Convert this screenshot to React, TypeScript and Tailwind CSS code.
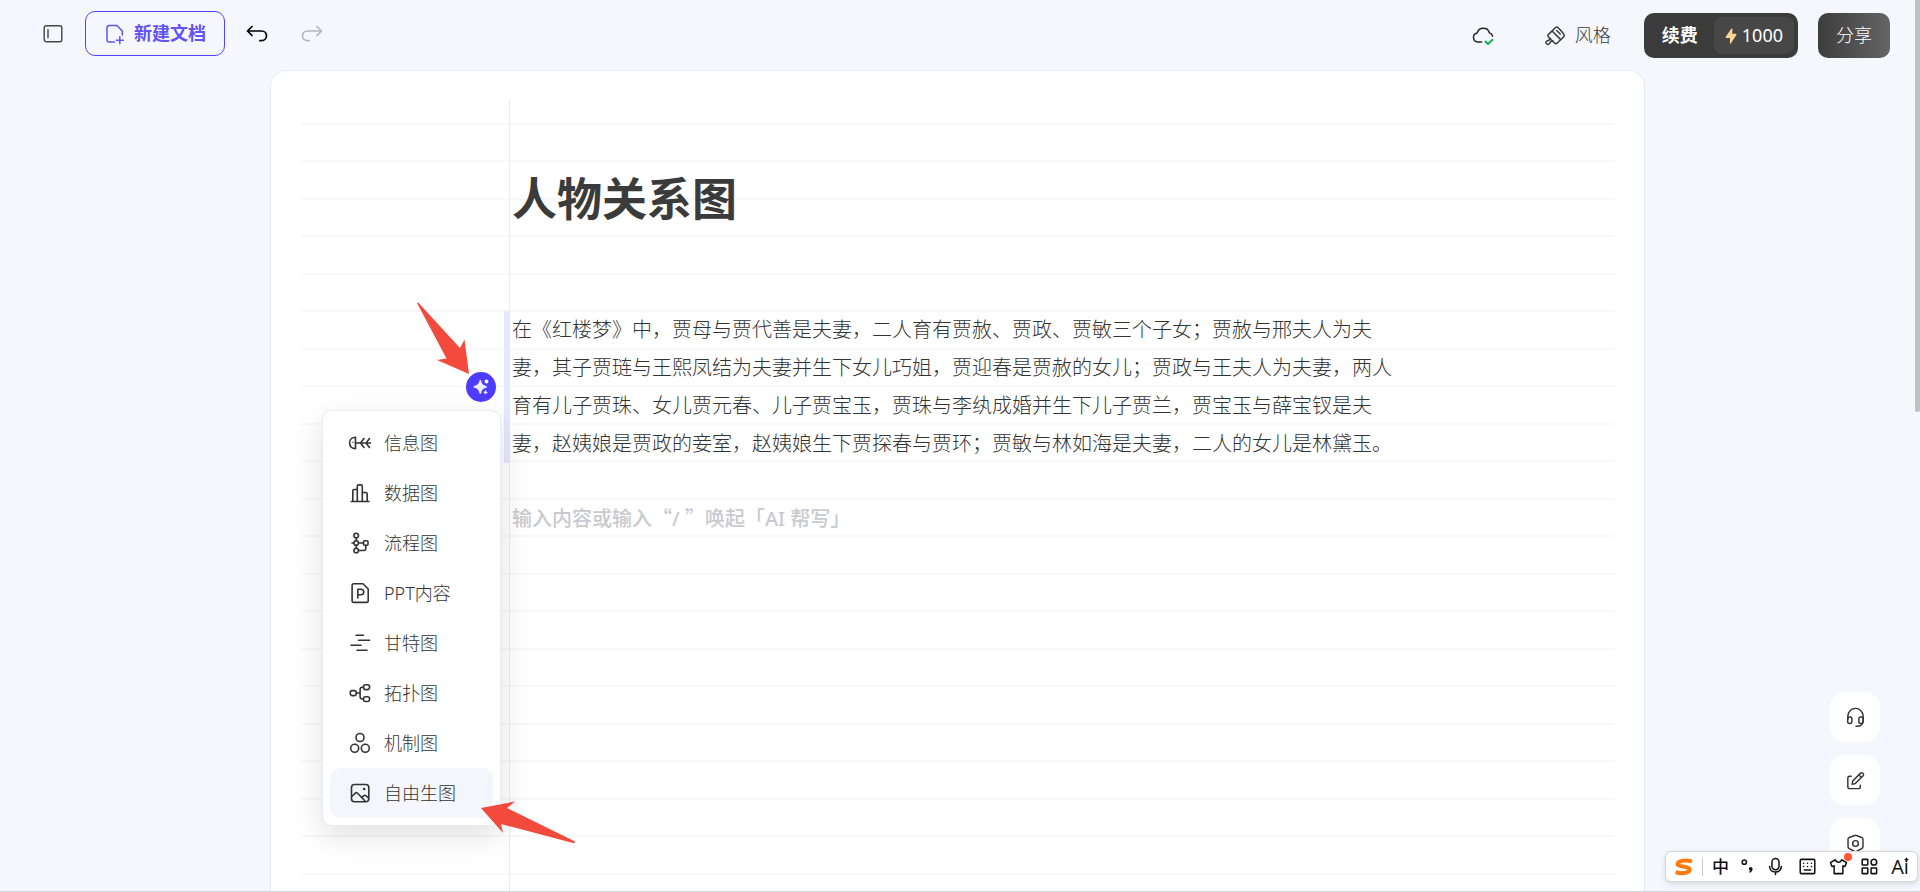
import type { ReactNode } from "react";

const sans = "font-['Noto_Sans','Noto_Sans_CJK_SC',sans-serif]";

function Icon({ children, size = "size-6", box = "0 0 24 24", stroke = "1.5" }: { children: ReactNode; size?: string; box?: string; stroke?: string }) {
  return (
    <svg
      aria-hidden="true"
      className={`${size} shrink-0`}
      viewBox={box}
      fill="none"
      stroke="currentColor"
      strokeWidth={stroke}
      strokeLinecap="round"
      strokeLinejoin="round"
    >
      {children}
    </svg>
  );
}

const menu: { label: string; icon: ReactNode }[] = [
  {
    label: "信息图",
    icon: (
      <>
        <path d="M7.500 6.300v11.400C4 17.600 1.600 15.300 1.600 12S4 6.400 7.500 6.300Z" />
        <path d="M7.500 12h15M16 7.500 12.500 12l3.500 4.500M21.500 7.500 18 12l3.500 4.500" />
        <circle cx="5" cy="11.300" r=".7" fill="currentColor" stroke="none" />
      </>
    ),
  },
  {
    label: "数据图",
    icon: <path d="M3.200 20.500h17.800M4.800 20.500V9.800q0-1.300 1.300-1.300h3.200M9.300 20.500V5.300q0-1.400 1.400-1.400h2.200q1.400 0 1.400 1.400v15.200M14.300 11.500h3.500q1.400 0 1.400 1.400v7.600" />,
  },
  {
    label: "流程图",
    icon: (
      <>
        <circle cx="8.200" cy="4.500" r="2.300" />
        <circle cx="8.200" cy="12" r="2.300" />
        <circle cx="8.200" cy="19.500" r="2.300" />
        <rect x="15.500" y="9.800" width="4.500" height="4.500" rx="1" />
        <path d="M8.200 6.800v2.900M8.200 14.300v2.900M4 12h1.900M10.500 12h5M17.800 14.300v3.200q0 2-2 2h-5.300" />
      </>
    ),
  },
  {
    label: "PPT内容",
    icon: (
      <>
        <path d="M5.800 2.800h9.200l5.200 5.200v11.700q0 1.700-1.700 1.700H5.800q-1.700 0-1.700-1.700V4.500q0-1.700 1.700-1.700Z" />
        <path d="M9.800 17V8.200h3.200a2.700 2.700 0 0 1 0 5.500H9.800" />
      </>
    ),
  },
  {
    label: "甘特图",
    icon: <path d="M8 4.200h7.500M10.500 9.200h11M3 14.200h10M9 19.200h10" />,
  },
  {
    label: "拓扑图",
    icon: (
      <>
        <rect x="2.300" y="9.600" width="6" height="5" rx="2" />
        <rect x="15.500" y="3.800" width="6" height="4.800" rx="2" />
        <rect x="15.500" y="15.700" width="6" height="4.800" rx="2" />
        <path d="M8.300 12h3.800M15.500 6.200h-1.200q-2.200 0-2.200 2.200v7.400q0 2.200 2.200 2.200h1.200" />
      </>
    ),
  },
  {
    label: "机制图",
    icon: (
      <>
        <circle cx="12" cy="6.500" r="4" />
        <circle cx="6.700" cy="17.300" r="4" />
        <circle cx="17.300" cy="17.300" r="4" />
      </>
    ),
  },
  {
    label: "自由生图",
    icon: (
      <>
        <rect x="3.500" y="3.500" width="17.300" height="17.300" rx="3" />
        <path d="m4 15.300 3.300-3.200q1.200-1 2.300.1l7.200 7.600M14 16.300l1.800-1.600q1-.8 2 0l2.700 2.300" />
        <circle cx="16.200" cy="8" r="1.300" fill="currentColor" stroke="none" />
      </>
    ),
  },
];

const imeIcons: { label: string; icon: ReactNode; size: string; box?: string }[] = [
  {
    label: "标点",
    size: "h-[19px] w-[13px]",
    box: "2 0 16 24",
    icon: (
      <>
        <circle cx="6" cy="6.500" r="2.700" />
        <circle cx="14" cy="15" r="2.300" fill="currentColor" stroke="none" />
        <path d="M15.300 15.500q0 2.600-2.200 3.500" />
      </>
    ),
  },
  {
    label: "语音",
    size: "size-[19px]",
    icon: (
      <>
        <rect x="7.500" y="2" width="9" height="14" rx="4.500" />
        <path d="M4.500 12q.8 7 7.500 7t7.500-7M12 19v3" />
      </>
    ),
  },
  {
    label: "键盘",
    size: "size-[19px]",
    icon: (
      <>
        <rect x="2.800" y="3" width="18.400" height="18" rx="1.500" />
        <path d="M7 8h.1M12 8h.1M17 8h.1M7 12h.1M12 12h.1M17 12h.1M8 16.500h8" />
      </>
    ),
  },
  {
    label: "皮肤",
    size: "size-[19px]",
    icon: <path d="M8 3.500 1.800 7l2 5 2.700-.8V21h11v-9.800l2.700.8 2-5L16 3.500q-1 3-4 3t-4-3Z" />,
  },
  {
    label: "工具箱",
    size: "size-[19px]",
    icon: (
      <>
        <rect x="2.800" y="3" width="7" height="7" rx=".5" />
        <circle cx="17.500" cy="6.500" r="3.600" />
        <rect x="2.800" y="14" width="7" height="7" rx=".5" />
        <rect x="14" y="14" width="7" height="7" rx=".5" />
      </>
    ),
  },
];

function Header() {
  return (
    <header className="flex h-[70px] shrink-0 items-start justify-between pr-[25px] pl-[43px]">
      <div className="flex items-center pt-[11px]">
        <button type="button" aria-label="侧边栏" className="text-[#444]">
          <Icon size="size-5" box="0 0 20 20" stroke="1.4">
            <rect x="1.200" y="1.700" width="17.600" height="16" rx="2" />
            <path d="M5 5.700v8" />
          </Icon>
        </button>
        <button
          type="button"
          className="ml-[22px] flex h-[45px] items-center gap-[6px] rounded-[10px] border border-[#5142ff] px-[18px] text-[18px] font-bold text-[#6153f5]"
        >
          <Icon>
            <path d="M10.500 20H5.300Q3 20 3 17.700V5.800Q3 3.500 5.300 3.500h7.600L18.300 9v4M15.800 14.800v7M12.300 18.300h7" />
          </Icon>
          <span>新建文档</span>
        </button>
        <button type="button" aria-label="撤销" className="ml-5 text-black">
          <Icon stroke="1.700">
            <path d="M7 4.500 2.500 9 7 13.500M2.500 9h14.200a4.800 4.800 0 0 1 0 9.600h-1.900" />
          </Icon>
        </button>
        <button type="button" aria-label="重做" className="ml-[31px] text-[#b4b6bb]">
          <Icon stroke="1.700">
            <path d="M17 4.500 21.500 9 17 13.500M21.500 9H7.300a4.800 4.800 0 0 0 0 9.600h1.900" />
          </Icon>
        </button>
      </div>
      <div className="flex items-center pt-[13px]">
        <button type="button" aria-label="已保存到云端" className="text-[#222]">
          <Icon>
            <path d="M10.500 18H6.800a4.600 4.600 0 0 1-.6-9.100 6.300 6.300 0 0 1 12.200 0 4.500 4.500 0 0 1 3.200 3.300" />
            <path className="stroke-[#10b350]" strokeWidth="2" d="m14.500 17.500 2.500 2.500 4.500-4.300" />
          </Icon>
        </button>
        <button type="button" className="ml-12 flex items-center gap-2 text-[18px] font-light text-[#3a3a3a]">
          <Icon>
            <path d="M5.300 10.600 12.600 3.500q1.200-1 2.300 0l2 2 2.800 3.200 1.300 1.900q.7 1.100-.2 2.200L14 19.200q-1.200 1-2.400 0l-6.300-6.400q-1-1.100 0-2.200Z" />
            <path d="m9.300 7.200 8.200 8.200M13.700 6.500l3.500 3.600M6.800 14.200l-.7 2-1.700.5q-2.300.9-1 2.900 1.600 1.700 3.200-.1l1-2 2.300-.4" />
          </Icon>
          <span>风格</span>
        </button>
        <button type="button" className="ml-[33px] flex h-[45px] items-center gap-4 rounded-[10px] bg-[#3b3b3b] pr-1 pl-[18px] text-[18px] text-white">
          <span className="font-bold">续费</span>
          <span className="flex h-[37px] items-center gap-[5px] rounded-lg bg-[#474747] px-[11px]">
            <svg aria-hidden="true" className="h-4 w-3" viewBox="0 0 12 16">
              <path className="fill-[#ffd596]" d="M6.300.8Q7.600-.2 7.500 1.300L7.200 5.800h3.300q1.500.2.700 1.500L6 15.200q-1.100 1.100-1.100-.4L5 10H1.500Q0 9.800.9 8.500Z" />
            </svg>
            <span>1000</span>
          </span>
        </button>
        <button type="button" className="ml-5 h-[45px] rounded-[10px] bg-linear-to-r from-[#3d3d3d] to-[#656565] px-[18px] text-[18px] font-light text-white">
          分享
        </button>
      </div>
    </header>
  );
}

function TypeMenu() {
  return (
    <div className="absolute top-[339px] left-[51px] flex w-[179px] flex-col rounded-[10px] border border-[#ebebf5] bg-white p-[7px] shadow-[0_10px_30px_rgba(0,0,0,0.12)]">
      {menu.map((item, i) => (
        <button
          key={item.label}
          type="button"
          className={`flex h-[50px] items-center gap-3 rounded-[10px] px-[18px] text-[18px] font-light text-[#333] ${
            i === menu.length - 1 ? "bg-[#f5f6fc]" : ""
          }`}
        >
          <Icon stroke="1.600">{item.icon}</Icon>
          <span>{item.label}</span>
        </button>
      ))}
    </div>
  );
}

function Arrow({ place, box, d }: { place: string; box: string; d: string }) {
  return (
    <svg aria-hidden="true" className={`absolute ${place}`} viewBox={box}>
      <path className="fill-[#f24a3d]" d={d} />
    </svg>
  );
}

function Sheet() {
  return (
    <main className="relative mx-auto flex w-full max-w-[1375px] flex-1 flex-col rounded-t-2xl border border-b-0 border-[#e8ebf6] bg-white px-[30px] pt-[30px]">
      <div className="flex flex-1 bg-[linear-gradient(to_bottom,transparent_22px,#f8f8f8_22px,#f8f8f8_24px,transparent_24px,transparent_59px,#f8f8f8_59px,#f8f8f8_61px,transparent_61px)] bg-[length:100%_75px]">
        <div className="ml-[208px] flex-1 border-l border-[#fde3e0] pl-[2px]">
          <h1 className="pt-[64px] text-[45px] leading-[68px] font-bold text-[#3b3b3b]">人物关系图</h1>
          <div className="mt-[78px] -ml-2 border-l-[5px] border-[#e6e8ff] pl-[3px]">
            <p className="max-w-[885px] text-[20px] leading-[38px] font-light text-[#333]">
              在《红楼梦》中，贾母与贾代善是夫妻，二人育有贾赦、贾政、贾敏三个子女；贾赦与邢夫人为夫妻，其子贾琏与王熙凤结为夫妻并生下女儿巧姐，贾迎春是贾赦的女儿；贾政与王夫人为夫妻，两人育有儿子贾珠、女儿贾元春、儿子贾宝玉，贾珠与李纨成婚并生下儿子贾兰，贾宝玉与薛宝钗是夫妻，赵姨娘是贾政的妾室，赵姨娘生下贾探春与贾环；贾敏与林如海是夫妻，二人的女儿是林黛玉。
            </p>
          </div>
          <p className="mt-9 text-[20px] leading-[38px] font-medium text-[#c8cacf]">
            输入内容或输入<span className="font-['Noto_Sans_CJK_SC',sans-serif]">“</span>/ <span className="font-['Noto_Sans_CJK_SC',sans-serif]">”</span>唤起「AI 帮写」
          </p>
        </div>
      </div>

      <button
        type="button"
        aria-label="AI 生成"
        className="absolute top-[301px] left-[195px] flex size-[30px] items-center justify-center rounded-full bg-[#4d3bff] text-white"
      >
        <svg aria-hidden="true" className="size-4" viewBox="0 0 16 16" fill="currentColor">
          <path className="fill-[#eceaff]" d="M7.300.8q.6 0 .8.800c.9 3.500 1.600 4.300 5 5.400q.9.300.9.900t-.9.900c-3.400 1.100-4.100 1.900-5 5.400q-.2.800-.8.800t-.8-.8c-.9-3.500-1.600-4.300-5-5.400Q.4 8.500.4 7.900T1.300 7c3.400-1.100 4.300-1.900 5.200-5.400q.2-.8.8-.8Z" />
          <circle cx="13.500" cy="2.500" r="1.900" />
          <path d="M12.500 11q.4 2 2.300 2.400-1.900.4-2.300 2.300-.4-1.900-2.300-2.300 1.900-.4 2.300-2.400Z" />
        </svg>
      </button>
      <TypeMenu />
      <Arrow place="top-[231px] left-[145px] h-[74px] w-[55px]" box="0 0 55 74" d="M1 1 Q2-.5 4 2.500L44 46 48.500 37.500 53 72 21 58 30.500 56.500Z" />
      <Arrow place="top-[729px] left-[209px] h-[44px] w-[98px]" box="0 0 98 44" d="M1 8 35 1.500 27 8 94 41Q97 43 93 43L21 24 23 33Z" />
    </main>
  );
}

const floating: { label: string; icon: ReactNode }[] = [
  {
    label: "客服",
    icon: (
      <>
        <path d="M4 14v-3.500a8 8 0 0 1 16 0V15q0 6-6.500 6.200h-1" />
        <rect x="3.800" y="11.500" width="4.400" height="6.700" rx="2" />
        <rect x="15.500" y="11.500" width="4.400" height="6.700" rx="2" />
      </>
    ),
  },
  {
    label: "反馈",
    icon: (
      <>
        <path d="M7.500 7.500H6q-2 0-2 2v9q0 2 2 2h9q2 0 2-2V17" />
        <path d="m9 12.500 8.300-8.200q1.200-1 2.500.2t.2 2.500L11.800 15.200l-3.300.8ZM15.600 6.200l2.400 2.400" />
      </>
    ),
  },
  {
    label: "设置",
    icon: (
      <>
        <path d="m11 3.700-5.500 2Q4.200 6.300 4.200 7.500v8q0 1.200 1.300 1.800l5.500 3q1 .5 2 0l5.500-3q1.300-.6 1.300-1.800v-8q0-1.200-1.300-1.800l-5.500-2q-1-.5-2 0Z" />
        <circle cx="12" cy="12" r="3" />
      </>
    ),
  },
];

function ImeBar() {
  return (
    <div className="absolute right-[2px] bottom-[10px] flex h-[31px] w-[253px] items-center rounded-md border border-[#d4d6da] bg-white pr-2 pl-2 text-[#111] shadow-[0_2px_6px_rgba(0,0,0,0.12)]">
      <svg aria-hidden="true" className="h-[18px] w-5 shrink-0" viewBox="0 0 20 18">
        <path
          fill="none"
          className="stroke-[#ff7a0f]"
          strokeWidth="4"
          d="M18 3.200Q9 1.300 4.500 4.200 1.800 6.800 6 7.900l6.500 1.300q4.500 1.300 2.500 4-3.500 3.300-13.500 1"
        />
      </svg>
      <span className="ml-2 h-[18px] w-px shrink-0 bg-[#ccc]" />
      <div className="flex flex-1 items-center justify-between pl-[9px] text-[17px] leading-[20px]">
        <span className="font-medium">中</span>
        {imeIcons.map((item) => (
          <button key={item.label} type="button" aria-label={item.label} className="relative">
            <Icon size={item.size} box={item.box} stroke="1.900">
              {item.icon}
            </Icon>
            {item.label === "皮肤" && <span className="absolute -top-1 -right-1 size-2 rounded-full bg-[#ff5535]" />}
          </button>
        ))}
        <span className="flex font-['Open_Sans',sans-serif] text-[20px]">
          Ai
          <svg aria-hidden="true" className="-ml-[5px] size-[5px]" viewBox="0 0 6 6">
            <path fill="currentColor" d="M3 0 4 2 6 3 4 4 3 6 2 4 0 3 2 2Z" />
          </svg>
        </span>
      </div>
    </div>
  );
}

export default function App() {
  return (
    <div className={`relative flex h-screen flex-col overflow-hidden bg-[#f5f7fc] pr-[5px] ${sans}`}>
      <Header />
      <Sheet />
      <div className="absolute top-0 right-0 h-[412px] w-[5px] rounded-b-xs bg-[#c1c1c1]" />
      <div className="absolute top-[692px] right-10 flex flex-col gap-[13px]">
        {floating.map((item) => (
          <button key={item.label} type="button" aria-label={item.label} className="flex size-[50px] items-center justify-center rounded-[15px] bg-white text-[#333]">
            <Icon size="size-[23px]">{item.icon}</Icon>
          </button>
        ))}
      </div>
      <div className="absolute inset-x-0 bottom-0 h-px bg-[#cfd8e4]" />
      <ImeBar />
    </div>
  );
}
